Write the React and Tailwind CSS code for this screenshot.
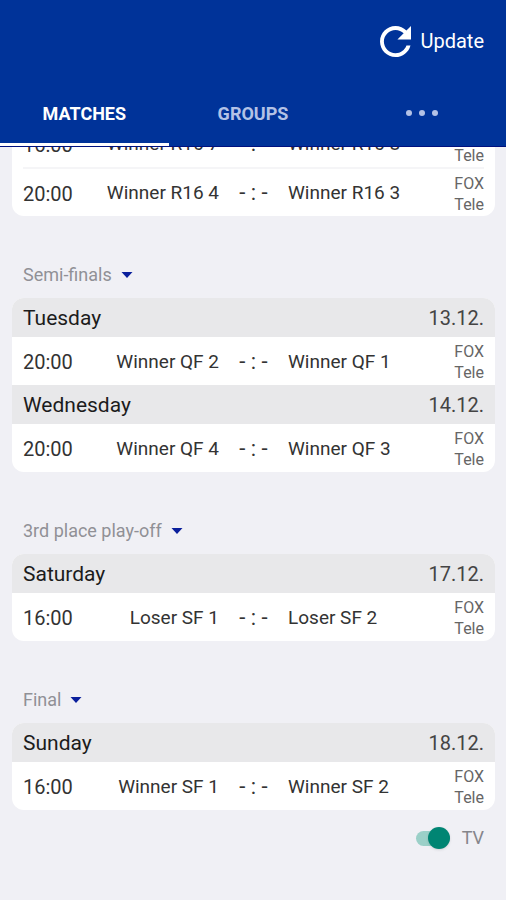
import React, { useState } from "react";

const TABS = ["MATCHES", "GROUPS", "more"];

const ROUNDS = [
  {
    name: "Quarter-finals",
    days: [
      {
        day: "Saturday",
        date: "10.12.",
        matches: [
          { time: "16:00", home: "Winner R16 7", away: "Winner R16 8" },
          { time: "20:00", home: "Winner R16 4", away: "Winner R16 3" },
        ],
      },
    ],
  },
  {
    name: "Semi-finals",
    days: [
      {
        day: "Tuesday",
        date: "13.12.",
        matches: [{ time: "20:00", home: "Winner QF 2", away: "Winner QF 1" }],
      },
      {
        day: "Wednesday",
        date: "14.12.",
        matches: [{ time: "20:00", home: "Winner QF 4", away: "Winner QF 3" }],
      },
    ],
  },
  {
    name: "3rd place play-off",
    days: [
      {
        day: "Saturday",
        date: "17.12.",
        matches: [{ time: "16:00", home: "Loser SF 1", away: "Loser SF 2" }],
      },
    ],
  },
  {
    name: "Final",
    days: [
      {
        day: "Sunday",
        date: "18.12.",
        matches: [{ time: "16:00", home: "Winner SF 1", away: "Winner SF 2" }],
      },
    ],
  },
];

const Header = ({ tab, setTab }) => {
  return (
    <header className="shrink-0 border-b border-[#00107f] bg-[#003399]">
      <div className="flex h-21 items-center justify-end px-[22px] pb-0.5">
        <button type="button" className="flex items-center gap-[9px] text-xl text-white">
          <svg
            className="h-[31px] w-[31px]"
            viewBox="4 4 16 16"
            fill="currentColor"
            aria-hidden="true"
          >
            <path d="M17.65 6.35C16.2 4.9 14.21 4 12 4c-4.42 0-7.99 3.58-7.99 8s3.57 8 7.99 8c3.73 0 6.84-2.55 7.73-6h-2.08c-.82 2.33-3.04 4-5.65 4-3.31 0-6-2.69-6-6s2.69-6 6-6c1.66 0 3.14.69 4.22 1.78L13 11h7V4l-2.35 2.35z" />
          </svg>
          Update
        </button>
      </div>
      <nav className="grid grid-cols-3">
        {TABS.map((name) => (
          <button
            key={name}
            type="button"
            aria-label={name}
            onClick={() => setTab(name)}
            className={
              tab === name
                ? "flex h-[62px] items-center justify-center border-b-3 border-white text-lg font-bold text-white"
                : "flex h-[62px] items-center justify-center border-b-3 border-transparent text-lg font-bold text-[#b3c2e6]"
            }
          >
            {name === "more" ? (
              <svg className="h-2 w-8" viewBox="0 0 32 8" fill="currentColor">
                <circle cx="3" cy="3" r="3" />
                <circle cx="16" cy="3" r="3" />
                <circle cx="29" cy="3" r="3" />
              </svg>
            ) : (
              name
            )}
          </button>
        ))}
      </nav>
    </header>
  );
};

const MatchDay = ({ day, date, matches, showTv }) => {
  return (
    <div>
      <div className="flex h-[39px] items-baseline justify-between bg-[#e8e8ea] px-[11px] text-xl leading-10">
        <h3 className="text-[21px] text-[#1c1c1c]">{day}</h3>
        <span className="text-[#444444]">{date}</span>
      </div>
      <div className="px-[11px]">
        <table className="w-full table-fixed text-[19px] text-[#333333]">
          <tbody>
            {matches.map((match, i) => (
              <tr
                key={match.home}
                className={i > 0 ? "h-12 border-t-2 border-[#f5f5f7]" : "h-12"}
              >
                <td className="w-14 pt-0.5 text-xl">{match.time}</td>
                <td className="pt-0.5 text-right whitespace-nowrap">{match.home}</td>
                <td className="w-[69px] text-center text-[22px]">- : -</td>
                <td className="pt-0.5 whitespace-nowrap">{match.away}</td>
                <td className="w-14 pt-0.5 text-right text-base leading-[21px] text-[#666666]">
                  {showTv && (
                    <>
                      <div>FOX</div>
                      <div>Tele</div>
                    </>
                  )}
                </td>
              </tr>
            ))}
          </tbody>
        </table>
      </div>
    </div>
  );
};

const Round = ({ name, days, showTv }) => {
  const [open, setOpen] = useState(true);

  return (
    <section className="pt-11">
      <h2 className="mb-2 px-[11px]">
        <button
          type="button"
          onClick={() => setOpen(!open)}
          className="flex h-[30px] items-center gap-[9px] text-lg text-[#909096]"
        >
          {name}
          <svg className="h-[6px] w-3" viewBox="0 0 12 6" aria-hidden="true">
            <path d="M0.5 0H11.5L6 6Z" fill="#0a1f9c" />
          </svg>
        </button>
      </h2>
      {open && (
        <div className="overflow-hidden rounded-xl bg-white">
          {days.map((d) => (
            <MatchDay key={d.date} {...d} showTv={showTv} />
          ))}
        </div>
      )}
    </section>
  );
};

const App = () => {
  const [tab, setTab] = useState("MATCHES");
  const [showTv, setShowTv] = useState(true);

  return (
    <div className="flex h-screen flex-col bg-[#f0f0f5] font-['Roboto',sans-serif]">
      <Header tab={tab} setTab={setTab} />
      {/* reversed column, so the list opens scrolled to the last round */}
      <main className="flex min-h-0 flex-1 flex-col-reverse overflow-y-auto [scrollbar-width:none]">
        <div className="pr-[11px] pb-[34px] pl-3">
          {ROUNDS.map((round) => (
            <Round key={round.name} {...round} showTv={showTv} />
          ))}
          <div className="flex h-14 items-center justify-end gap-3 px-[11px] text-lg text-[#85858b]">
            <input
              id="tv"
              type="checkbox"
              role="switch"
              checked={showTv}
              onChange={(e) => setShowTv(e.target.checked)}
              className="flex h-[15px] w-[34px] appearance-none items-center rounded-full bg-gray-300 before:h-[22px] before:w-[22px] before:shrink-0 before:rounded-full before:bg-white before:shadow checked:justify-end checked:bg-[#9bd0c8] checked:before:bg-[#008573]"
            />
            <label htmlFor="tv">TV</label>
          </div>
        </div>
      </main>
    </div>
  );
};

export default App;
